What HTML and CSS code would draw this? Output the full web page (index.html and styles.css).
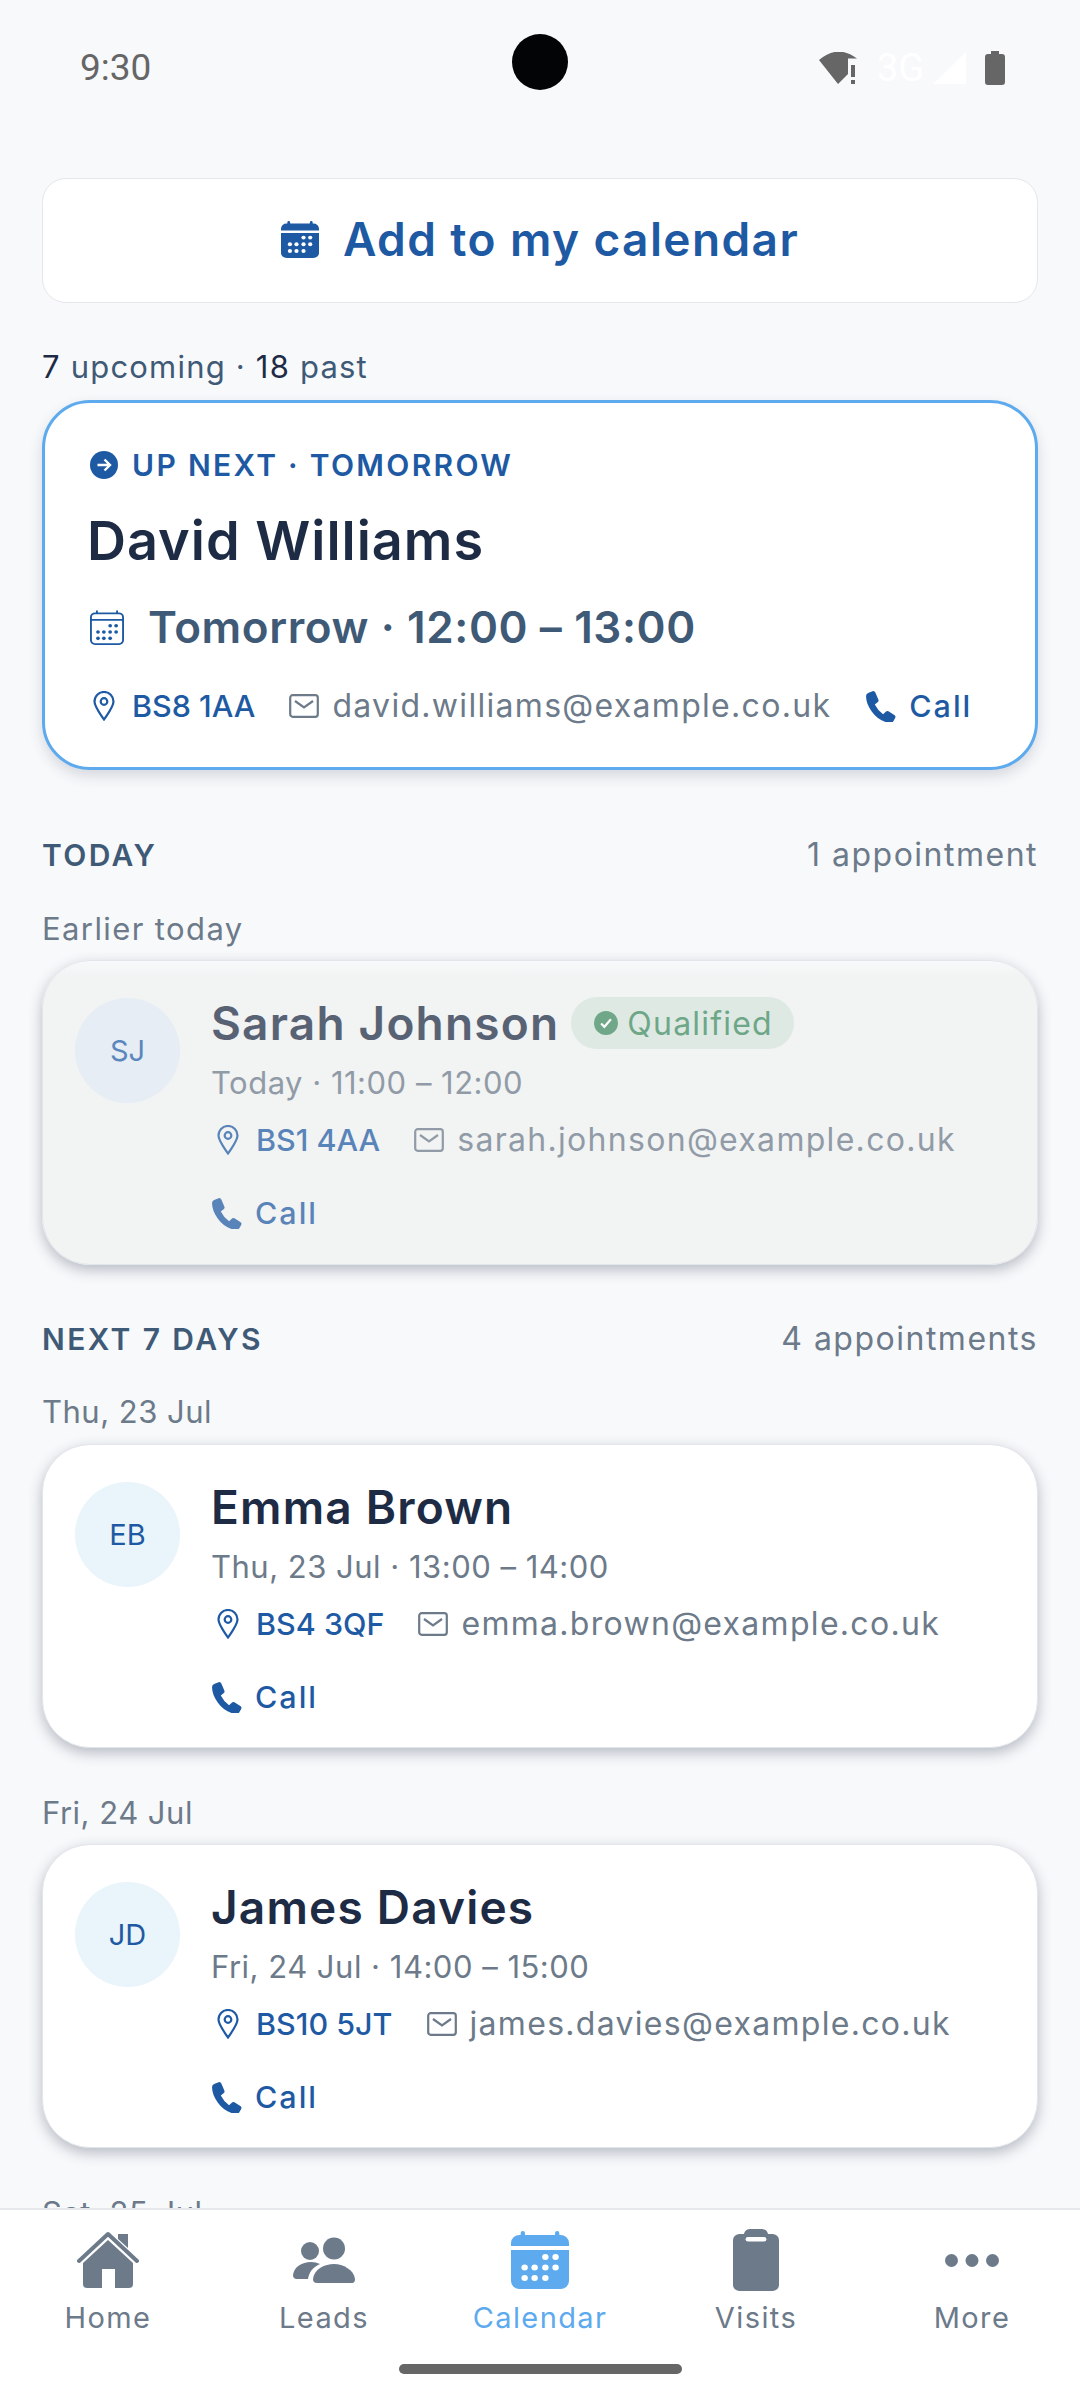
FILE: index.html
```html
<!DOCTYPE html>
<html lang="en">
<head>
  <meta charset="UTF-8" />
  <meta name="viewport" content="width=device-width, initial-scale=1.0" />
  <title>Calendar</title>
  <link rel="stylesheet" href="styles.css">
</head>
<body>
  <svg class="defs" width="0" height="0">
    <symbol id="cal-dots" viewBox="0 0 54 58" preserveAspectRatio="none">
      <circle cx="32" cy="26" r="3"/><circle cx="41.5" cy="26" r="3"/>
      <circle cx="12.7" cy="36.5" r="3"/><circle cx="22" cy="36.5" r="3"/><circle cx="32" cy="36.5" r="3"/><circle cx="41.5" cy="36.5" r="3"/>
      <circle cx="12.7" cy="47" r="3"/><circle cx="22" cy="47" r="3"/><circle cx="32" cy="47" r="3"/>
    </symbol>
    <symbol id="cal-solid" viewBox="0 0 54 58" preserveAspectRatio="none">
      <path fill="currentColor" d="M9 4V2a2 2 0 0 1 4 0v2h28V2a2 2 0 0 1 4 0v2h1a8 8 0 0 1 8 8v3H0v-3a8 8 0 0 1 8-8zM0 19h54v31a8 8 0 0 1-8 8H8a8 8 0 0 1-8-8z"/>
      <use href="#cal-dots" fill="#fff"/>
    </symbol>
    <symbol id="cal-line" viewBox="0 0 54 58" preserveAspectRatio="none">
      <path fill="none" stroke="currentColor" stroke-width="3" d="M8 5.500h38a6.500 6.500 0 0 1 6.500 6.500v38a6.500 6.500 0 0 1-6.500 6.500H8A6.500 6.500 0 0 1 1.500 50V12A6.500 6.500 0 0 1 8 5.500zM2 16.500h50M11 1v5M43 1v5"/>
      <use href="#cal-dots" fill="currentColor"/>
    </symbol>
    <symbol id="pin" viewBox="0 0 22 30">
      <path fill="none" stroke="currentColor" stroke-width="2.200" d="M11 28.500C6 21 1.500 15.500 1.500 10.500a9.500 9.500 0 0 1 19 0C20.500 15.500 16 21 11 28.500z"/>
      <circle cx="11" cy="10.500" r="3.300" fill="none" stroke="currentColor" stroke-width="2.200"/>
    </symbol>
    <symbol id="mail" viewBox="0 0 30 24">
      <rect x="1.200" y="1.200" width="27.600" height="21.600" rx="2.500" fill="none" stroke="currentColor" stroke-width="2.200"/>
      <path fill="none" stroke="currentColor" stroke-width="2.200" d="M6 7l9 6.500L24 7"/>
    </symbol>
    <symbol id="phone" viewBox="0 0 30 30">
      <path fill="currentColor" d="M3 2l5-2q1.500 0 2 1.500l3 7q.5 1.500-.8 2.500l-2.700 2q3 6 8 9.500l2.600-2.500q1.200-1 2.600-.3l6 3.700q1.200 1 .6 2.400l-2 3.600q-1 1.500-3 1.500C12 30 1 16 1 5q0-2 2-3z"/>
    </symbol>
  </svg>

  <div class="phone">
    <header class="status-bar">
      <span class="clock">9:30</span>
      <span class="camera"></span>
      <div class="status-icons">
        <svg class="ic-wifi" viewBox="0 0 38 33"><path d="M0 8Q19-8 38 6.500H29V22L19 32zM32 13h4v12h-4zM32 28h4v4h-4z"/></svg>
        <span class="net">3G</span>
        <svg class="ic-signal" viewBox="0 0 33 32"><path d="M0 32L33 0v32z"/></svg>
        <svg class="ic-battery" viewBox="0 0 20 34"><path d="M6 0h8v3h3a3 3 0 0 1 3 3v25a3 3 0 0 1-3 3H3a3 3 0 0 1-3-3V6a3 3 0 0 1 3-3h3z"/></svg>
      </div>
    </header>

    <main class="content">
      <button class="add-btn">
        <svg class="ic-add"><use href="#cal-solid"/></svg>
        <span>Add to my calendar</span>
      </button>

      <p class="counts"><b>7</b> upcoming · <b>18</b> past</p>

      <section class="hero">
        <div class="hero-label">
          <svg class="ic-next" viewBox="0 0 28 28"><circle cx="14" cy="14" r="14" fill="#1e5aa3"/><path d="M7.500 14h12M14.500 8.500l5.500 5.500-5.500 5.500" fill="none" stroke="#fff" stroke-width="2.400"/></svg>
          <span>UP NEXT · TOMORROW</span>
        </div>
        <h2 class="hero-name">David Williams</h2>
        <div class="hero-date">
          <svg class="ic-cal"><use href="#cal-line"/></svg>
          <span>Tomorrow · 12:00 – 13:00</span>
        </div>
        <div class="meta hero-meta">
          <a class="link"><svg class="ic-pin"><use href="#pin"/></svg>BS8 1AA</a>
          <a class="email"><svg class="ic-mail"><use href="#mail"/></svg>david.williams@example.co.uk</a>
          <a class="link call"><svg class="ic-phone"><use href="#phone"/></svg>Call</a>
        </div>
      </section>

      <div class="section-head first"><h3>TODAY</h3><span>1 appointment</span></div>
      <p class="day day-today">Earlier today</p>
      <article class="card past">
        <div class="avatar">SJ</div>
        <div class="card-body">
          <div class="name-row">
            <h4>Sarah Johnson</h4>
            <span class="badge">
              <svg class="ic-check" viewBox="0 0 22 22"><circle cx="11" cy="11" r="11" fill="#3f8a5f"/><path d="M6.500 11.500l3 3 6-7" fill="none" stroke="#fff" stroke-width="2"/></svg>
              Qualified
            </span>
          </div>
          <p class="when">Today · 11:00 – 12:00</p>
          <div class="meta">
            <a class="link"><svg class="ic-pin"><use href="#pin"/></svg>BS1 4AA</a>
            <a class="email"><svg class="ic-mail"><use href="#mail"/></svg>sarah.johnson@example.co.uk</a>
            <a class="link call"><svg class="ic-phone"><use href="#phone"/></svg>Call</a>
          </div>
        </div>
      </article>

      <div class="section-head"><h3>NEXT 7 DAYS</h3><span>4 appointments</span></div>
      <p class="day day-next">Thu, 23 Jul</p>
      <article class="card">
        <div class="avatar">EB</div>
        <div class="card-body">
          <div class="name-row"><h4>Emma Brown</h4></div>
          <p class="when">Thu, 23 Jul · 13:00 – 14:00</p>
          <div class="meta">
            <a class="link"><svg class="ic-pin"><use href="#pin"/></svg>BS4 3QF</a>
            <a class="email"><svg class="ic-mail"><use href="#mail"/></svg>emma.brown@example.co.uk</a>
            <a class="link call"><svg class="ic-phone"><use href="#phone"/></svg>Call</a>
          </div>
        </div>
      </article>

      <p class="day">Fri, 24 Jul</p>
      <article class="card">
        <div class="avatar">JD</div>
        <div class="card-body">
          <div class="name-row"><h4>James Davies</h4></div>
          <p class="when">Fri, 24 Jul · 14:00 – 15:00</p>
          <div class="meta">
            <a class="link"><svg class="ic-pin"><use href="#pin"/></svg>BS10 5JT</a>
            <a class="email"><svg class="ic-mail"><use href="#mail"/></svg>james.davies@example.co.uk</a>
            <a class="link call"><svg class="ic-phone"><use href="#phone"/></svg>Call</a>
          </div>
        </div>
      </article>

      <p class="day">Sat, 25 Jul</p>
    </main>

    <nav class="tabbar">
      <div class="tabs">
        <a class="tab">
          <span class="tab-icon">
            <svg class="ic-home" viewBox="0 0 62 58"><path fill="none" stroke="currentColor" stroke-width="4" stroke-linecap="round" stroke-linejoin="round" d="M2 30L31 3l29 27"/><path fill="currentColor" d="M41 3h10v14L41 8zM31 9l25 23v21a4 4 0 0 1-4 4H38V38H25v19H10a4 4 0 0 1-4-4V32z"/></svg>
          </span>
          Home
        </a>
        <a class="tab">
          <span class="tab-icon">
            <svg class="ic-leads" viewBox="0 0 62 46"><g fill="currentColor"><circle cx="41" cy="11.500" r="11"/><circle cx="17" cy="14" r="9"/><path d="M20 42C21 32 32 27 41 27s20 6 21 15q0 4-3 4H24q-4 0-4-4z"/><path d="M0 38C1 30 9 25 18 25q5 0 9 2c-7 3-11 8-12 15H4q-4 0-4-4z"/></g></svg>
          </span>
          Leads
        </a>
        <a class="tab active">
          <span class="tab-icon"><svg class="ic-calendar"><use href="#cal-solid"/></svg></span>
          Calendar
        </a>
        <a class="tab">
          <span class="tab-icon">
            <svg class="ic-visits" viewBox="0 0 42 62" preserveAspectRatio="none"><path fill="currentColor" d="M6 5h4q1-5 6-5h10q5 0 6 5h4a6 6 0 0 1 6 6v45a6 6 0 0 1-6 6H6a6 6 0 0 1-6-6V11a6 6 0 0 1 6-6z"/><rect x="11.500" y="8" width="19" height="4.500" rx="2.200" fill="#fff"/></svg>
          </span>
          Visits
        </a>
        <a class="tab">
          <span class="tab-icon">
            <svg class="ic-more" viewBox="0 0 50 12"><g fill="currentColor"><circle cx="6" cy="6" r="6"/><circle cx="25" cy="6" r="6"/><circle cx="44" cy="6" r="6"/></g></svg>
          </span>
          More
        </a>
      </div>
      <div class="home-bar"></div>
    </nav>
  </div>
</body>
</html>
```

FILE: styles.css
```css
* {
  box-sizing: border-box;
}
body {
  margin: 0;
  font-family: Inter, "Noto Sans", sans-serif;
  background: #f8f9fb;
}
h2, h3, h4, p {
  margin: 0;
}
.defs {
  position: absolute;
}
.phone {
  width: 1080px;
  height: 2400px;
  display: flex;
  flex-direction: column;
  overflow: hidden;
}

/* status bar */
.status-bar {
  height: 120px;
  flex: none;
  position: relative;
  display: flex;
  justify-content: space-between;
  align-items: flex-start;
  padding: 0 75px 0 80px;
}
.clock {
  font-family: Roboto, sans-serif;
  font-size: 37px;
  line-height: 42px;
  margin-top: 47px;
  color: #666;
}
.camera {
  position: absolute;
  left: 512px;
  top: 34px;
  width: 56px;
  height: 56px;
  border-radius: 50%;
  background: #030405;
}
.status-icons {
  display: flex;
  align-items: center;
  margin-top: 50px;
  height: 36px;
  color: #666;
}
.ic-wifi {
  width: 38px;
  height: 33px;
  fill: #666;
}
.net {
  font-family: Roboto, sans-serif;
  font-size: 38px;
  line-height: 36px;
  color: #fff;
  margin-left: 20px;
  width: 56px;
}
.ic-signal {
  width: 33px;
  height: 32px;
  fill: #fff;
}
.ic-battery {
  width: 20px;
  height: 34px;
  margin-left: 19px;
  fill: #666;
}

/* scrolling content */
.content {
  flex: 1;
  min-height: 0;
  overflow: hidden;
  padding: 58px 42px 0;
}
.add-btn {
  width: 100%;
  height: 125px;
  padding: 0 0 3px;
  background: #fff;
  border: 1.5px solid #e4e7eb;
  border-radius: 24px;
  color: #1e5aa3;
  font-family: inherit;
  font-size: 46px;
  font-weight: 600;
  letter-spacing: 1.4px;
  display: flex;
  align-items: center;
  justify-content: center;
  gap: 24px;
}
.ic-add {
  width: 38px;
  height: 37px;
}
.counts {
  margin-top: 44px;
  font-size: 31px;
  letter-spacing: 1.2px;
  line-height: 40px;
  color: #3f5a76;
}
.counts b {
  font-weight: 400;
  color: #1e2b45;
}

.hero {
  margin-top: 13px;
  height: 370px;
  padding: 42px 28px 0 45px;
  background: #fff;
  border: 3px solid #5eaaee;
  border-radius: 48px;
  box-shadow: 0 6px 14px rgba(30, 43, 69, 0.16);
}
.hero-label {
  display: flex;
  align-items: center;
  gap: 14px;
  font-size: 30px;
  font-weight: 600;
  line-height: 40px;
  letter-spacing: 2.3px;
  color: #1e5aa3;
}
.ic-next {
  width: 28px;
  height: 28px;
}
.hero-name {
  margin-top: 21px;
  margin-left: -3px;
  font-size: 54px;
  font-weight: 600;
  letter-spacing: 1px;
  line-height: 70px;
  color: #1e2b45;
}
.hero-date {
  margin-top: 21px;
  display: flex;
  align-items: center;
  gap: 24px;
  font-size: 44px;
  font-weight: 600;
  letter-spacing: 0.6px;
  line-height: 60px;
  color: #3f5a76;
}
.ic-cal {
  width: 34px;
  height: 35px;
  color: #1e5aa3;
}
.meta {
  display: flex;
  flex-wrap: wrap;
  align-items: center;
  column-gap: 34px;
  row-gap: 29px;
  margin-top: 15px;
  font-size: 32px;
  line-height: 44px;
}
.hero-meta {
  margin-top: 27px;
  flex-wrap: nowrap;
}
.link, .email {
  display: flex;
  align-items: center;
}
.link {
  color: #1e5aa3;
  font-size: 30.5px;
  font-weight: 500;
}
.call {
  letter-spacing: 2px;
}
.email {
  color: #6c7a8a;
  letter-spacing: 1.3px;
}
.ic-pin {
  width: 22px;
  height: 30px;
  margin: 0 17px 0 3px;
}
.card .ic-pin {
  margin-left: 6px;
}
.ic-mail {
  width: 30px;
  height: 24px;
  margin-right: 13px;
}
.ic-phone {
  width: 31px;
  height: 31px;
  margin-right: 13px;
}

.section-head {
  margin-top: 54px;
  display: flex;
  justify-content: space-between;
  font-size: 32px;
  letter-spacing: 1.5px;
  line-height: 40px;
  color: #6c7a8a;
}
.section-head.first {
  margin-top: 65px;
}
.section-head h3 {
  font-size: 30px;
  font-weight: 600;
  letter-spacing: 2.4px;
  color: #3f5a76;
}
.day {
  margin-top: 45px;
  margin-bottom: 11px;
  font-size: 31px;
  letter-spacing: 0.5px;
  line-height: 40px;
  color: #6c7a8a;
}
.day-today {
  margin-top: 34px;
  margin-bottom: 11px;
  letter-spacing: 1.4px;
}
.day-next {
  margin-top: 33px;
  margin-bottom: 12px;
}

.card {
  height: 304px;
  display: flex;
  align-items: flex-start;
  gap: 31px;
  padding: 32px 32px 0;
  background: #fff;
  border: 1px solid #e2e5ea;
  border-radius: 48px;
  box-shadow: 0 5px 14px rgba(30, 43, 69, 0.3);
}
.card.past {
  height: 305px;
  background: linear-gradient(#f8f9fa, #f2f3f3 16px);
}
.past .card-body {
  opacity: 0.72;
}
.avatar {
  width: 105px;
  height: 105px;
  margin-top: 5px;
  flex: none;
  border-radius: 50%;
  background: #e9f4fb;
  color: #1e5aa3;
  font-size: 29px;
  display: flex;
  align-items: center;
  justify-content: center;
}
.past .avatar {
  background: #e6edf4;
  color: #5c87bd;
}
.card-body {
  flex: 1;
  min-width: 0;
}
.name-row {
  display: flex;
  align-items: center;
  gap: 12px;
  height: 60px;
}
.name-row h4 {
  font-size: 46px;
  font-weight: 600;
  letter-spacing: 1.2px;
  color: #1e2b45;
}
.badge {
  height: 52px;
  padding: 0 21px 0 23px;
  border-radius: 26px;
  background: #d7e6dd;
  color: #3a8a5e;
  font-size: 32px;
  letter-spacing: 1.2px;
  display: flex;
  align-items: center;
  gap: 9px;
}
.ic-check {
  width: 24px;
  height: 24px;
}
.when {
  margin-top: 10px;
  font-size: 31px;
  letter-spacing: 0.5px;
  line-height: 40px;
  color: #6c7a8a;
}

/* bottom tabs */
.tabbar {
  height: 192px;
  flex: none;
  background: #fff;
  border-top: 2px solid #e6e8ec;
}
.tabs {
  display: grid;
  grid-template-columns: repeat(5, 216px);
}
.tab {
  display: flex;
  flex-direction: column;
  align-items: center;
  color: #6c7a8a;
  font-size: 29px;
  letter-spacing: 1.4px;
  line-height: 40px;
}
.tab.active {
  color: #5eaaee;
}
.tab-icon {
  height: 72px;
  margin-top: 14px;
  margin-bottom: 2px;
  display: flex;
  align-items: center;
}
.ic-home {
  width: 62px;
  height: 58px;
}
.ic-leads {
  width: 62px;
  height: 46px;
}
.ic-calendar {
  width: 58px;
  height: 58px;
}
.ic-visits {
  width: 46px;
  height: 62px;
}
.ic-more {
  width: 54px;
  height: 13px;
}
.home-bar {
  width: 283px;
  height: 10px;
  margin: 26px auto 0;
  border-radius: 5px;
  background: #666;
}
```
